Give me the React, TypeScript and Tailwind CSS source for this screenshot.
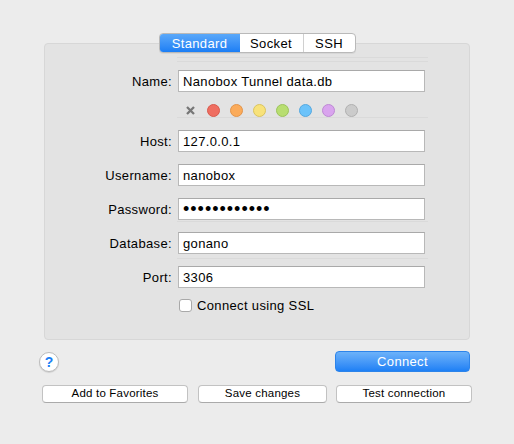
import React from 'react'

const labels = [
  { label: 'Host:', value: '127.0.0.1' },
  { label: 'Username:', value: 'nanobox' },
]

const dots = [
  { fill: 'bg-[#ef6e61]', border: 'border-[#d85a4d]' },
  { fill: 'bg-[#fbab5a]', border: 'border-[#e2944a]' },
  { fill: 'bg-[#f8e27a]', border: 'border-[#dac45e]' },
  { fill: 'bg-[#b8de71]', border: 'border-[#9cc45b]' },
  { fill: 'bg-[#6cc3fa]', border: 'border-[#55a8df]' },
  { fill: 'bg-[#d9a4ee]', border: 'border-[#bd89d4]' },
  { fill: 'bg-[#cbcbcb]', border: 'border-[#b0b0b0]' },
]

const Field = ({ label, children }: { label: string; children: React.ReactNode }) => (
  <div className="flex items-center h-[22px]">
    <div className="w-[127px] text-right text-black">{label}</div>
    <div className="ml-[6px] w-[247px] h-[22px] bg-white border border-[#b8b8b8] border-t-[#a9a9a9] flex items-center pl-[4px] text-black overflow-hidden">
      {children}
    </div>
  </div>
)

const Sep = () => <div className="ml-[132px] w-[251px] h-px bg-[#dadada]" />

const App = () => {
  return (
    <div
      className="w-[514px] h-[444px] bg-[#ececec] pt-[33px] text-[13px] tracking-[0.35px] leading-none"
      style={{ fontFamily: '"Liberation Sans", Arial, sans-serif' }}
    >
      <div className="mx-[44px] flex flex-col">
        {/* Segmented tabs */}
        <div className="flex justify-center relative z-10 h-[20px]">
          <div className="flex h-[20px] rounded-[4px] border border-[#b9b9b9] bg-white overflow-hidden shadow-[0_1px_0_rgba(0,0,0,0.05)]">
            <div className="w-[80px] flex items-center justify-center text-white bg-gradient-to-b from-[#5aa8f9] to-[#1a7ef5]">
              Standard
            </div>
            <div className="w-[64px] flex items-center justify-center text-black border-r border-[#d0d0d0]">
              Socket
            </div>
            <div className="w-[51px] flex items-center justify-center text-black">SSH</div>
          </div>
        </div>

        {/* Panel */}
        <div className="-mt-[10px] h-[297px] rounded-[4px] bg-[#e3e3e3] border border-[#d7d7d7] flex flex-col">
          <div className="h-[13px]" />
          <Sep />
          <div className="h-[3px]" />
          <Sep />
          <div className="h-[8px]" />

          <Field label="Name:">Nanobox Tunnel data.db</Field>

          <div className="mt-[12px] h-[13px] ml-[139px] flex items-center gap-[10px]">
            <div className="w-[13px] h-[13px] flex items-center justify-center">
              <svg width="9" height="9" viewBox="0 0 9 9">
                <path d="M1 1 L8 8 M8 1 L1 8" stroke="#777777" strokeWidth="2.3" strokeLinecap="butt" />
              </svg>
            </div>
            {dots.map((d, i) => (
              <div key={i} className={`w-[13px] h-[13px] rounded-full border ${d.fill} ${d.border}`} />
            ))}
          </div>
          <Sep />
          <div className="h-[12px]" />

          <div className="flex flex-col gap-[12px]">
            {labels.map((f) => (
              <Field key={f.label} label={f.label}>
                {f.value}
              </Field>
            ))}
            <Field label="Password:">
              <span className="text-[18px] tracking-[1px] leading-none -mt-[1px]">••••••••••••</span>
            </Field>
          </div>

          <div className="h-px" />
          <Sep />
          <div className="h-[10px]" />
          <Field label="Database:">gonano</Field>
          <div className="h-[4px]" />
          <Sep />
          <div className="h-[7px]" />
          <Field label="Port:">3306</Field>

          <div className="mt-[11px] ml-[134px] flex items-center h-[13px]">
            <div className="w-[13px] h-[13px] rounded-[3px] bg-white border border-[#a9a9a9]" />
            <span className="ml-[5px] text-black">Connect using SSL</span>
          </div>
        </div>
      </div>

      {/* Help + Connect */}
      <div className="mt-[11px] pl-[39px] pr-[44px] flex items-center justify-between h-[21px]">
        <div className="w-[20px] h-[20px] rounded-full bg-white border border-[#bcbcbc] shadow-[0_1px_1px_rgba(0,0,0,0.12)] flex items-center justify-center text-[#1b7ff5] text-[14px] font-bold tracking-normal">
          ?
        </div>
        <div className="w-[135px] h-[21px] rounded-[4px] bg-gradient-to-b from-[#6cb2f9] to-[#1d80f5] border border-[#2d84ea] flex items-center justify-center text-white">
          Connect
        </div>
      </div>

      {/* Bottom buttons */}
      <div className="mt-[13px] pl-[42px] flex h-[18px] text-[11.5px] tracking-[0.2px]">
        <div className="w-[146px] rounded-[4px] bg-white border border-[#c2c2c2] border-b-[#aaaaaa] flex items-center justify-center text-black">
          Add to Favorites
        </div>
        <div className="ml-[10px] w-[129px] rounded-[4px] bg-white border border-[#c2c2c2] border-b-[#aaaaaa] flex items-center justify-center text-black">
          Save changes
        </div>
        <div className="ml-[9px] w-[136px] rounded-[4px] bg-white border border-[#c2c2c2] border-b-[#aaaaaa] flex items-center justify-center text-black">
          Test connection
        </div>
      </div>
    </div>
  )
}

export default App
